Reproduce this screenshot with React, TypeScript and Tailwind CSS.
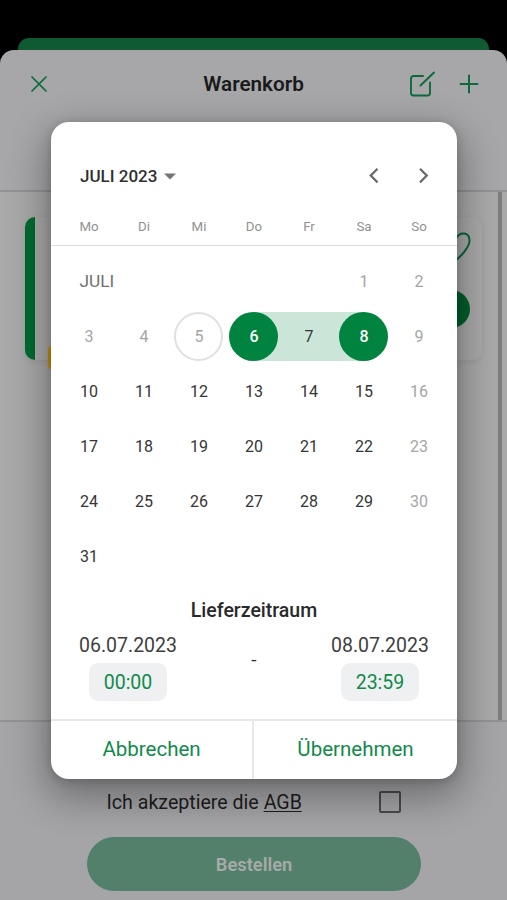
import React, { useState } from 'react';
import clsx from 'clsx';

type DayState = 'default' | 'disabled' | 'today' | 'start' | 'between' | 'end';

type DayCellProps = {
  day: number;
  state: DayState;
};

type DeliveryTimeProps = {
  date: string;
  time: string;
};

const WEEKDAYS = ['Mo', 'Di', 'Mi', 'Do', 'Fr', 'Sa', 'So'];
const DAYS = Array.from({ length: 31 }, (_, i) => i + 1);

const getDayState = (day: number): DayState => {
  if (day === 5) return 'today';
  if (day === 6) return 'start';
  if (day === 7) return 'between';
  if (day === 8) return 'end';
  // Past days and Sundays can't be picked
  if (day < 5 || day % 7 === 2) return 'disabled';
  return 'default';
};

const DayCell: React.FC<DayCellProps> = ({ day, state }) => (
  <div
    className={clsx(
      'flex h-[55px] items-center justify-center',
      state === 'start' && 'bg-[linear-gradient(90deg,transparent_50%,#cbe6d8_50%)] bg-[length:100%_49px] bg-center bg-no-repeat',
      state === 'between' && 'bg-[linear-gradient(#cbe6d8,#cbe6d8)] bg-[length:100%_49px] bg-center bg-no-repeat',
      state === 'end' && 'bg-[linear-gradient(90deg,#cbe6d8_50%,transparent_50%)] bg-[length:100%_49px] bg-center bg-no-repeat'
    )}
  >
    <button
      className={clsx(
        'flex size-[49px] items-center justify-center rounded-full pl-px text-[16px]',
        (state === 'default' || state === 'between') && 'text-[#353535]',
        state === 'disabled' && 'text-[#a5a5a5]',
        state === 'today' && 'border-2 border-[#e0e0e0] text-[#a5a5a5]',
        (state === 'start' || state === 'end') && 'bg-[#00833e] font-medium text-white'
      )}
    >
      {day}
    </button>
  </div>
);

const DeliveryTime: React.FC<DeliveryTimeProps> = ({ date, time }) => (
  <div className="flex w-[98px] flex-col items-center">
    <span className="text-[19.5px] leading-[24px] whitespace-nowrap text-[#3f3f3f]">{date}</span>
    <button className="mt-[5px] h-[38px] w-[78px] rounded-[9px] bg-[#eff0f1] pt-px text-[19.5px] text-[#118a4b]">
      {time}
    </button>
  </div>
);

const DateRangeDialog: React.FC = () => (
  <div className="absolute top-[122px] left-[51px] flex h-[657px] w-[406px] flex-col overflow-hidden rounded-[18px] bg-white shadow-[0_14px_38px_6px_rgba(0,0,0,0.32),0_2px_10px_rgba(0,0,0,0.18)]">
    <div className="mt-[40px] flex h-[28px] items-center pr-[24px] pl-[29px]">
      <button className="flex items-center gap-[7px] pt-px text-[17px] font-medium whitespace-nowrap text-[#303030]">
        JULI 2023
        <svg width="12" height="7" viewBox="0 0 12 7" fill="#757575">
          <path d="M0 .5h12L6 6.5z" />
        </svg>
      </button>
      <div className="ml-auto flex gap-[30px]">
        <button>
          <svg width="19" height="18" viewBox="0 0 19 18" fill="none" stroke="#6a6a6a" strokeWidth="2.2">
            <path d="M12.5 1.8 5.7 8.6l6.8 6.8" />
          </svg>
        </button>
        <button>
          <svg width="19" height="18" viewBox="0 0 19 18" fill="none" stroke="#6a6a6a" strokeWidth="2.2">
            <path d="m6 1.8 6.8 6.8-6.8 6.8" />
          </svg>
        </button>
      </div>
    </div>

    <div className="mt-[25px] grid h-[24px] grid-cols-7 items-center px-[10.5px] text-center text-[13.3px] text-[#919191]">
      {WEEKDAYS.map((weekday) => (
        <span key={weekday}>{weekday}</span>
      ))}
    </div>

    <div className="mt-[6px] grid grid-cols-7 border-t-[1.5px] border-[#dedede] pt-[8px] pr-[11px] pl-[10px]">
      <div className="col-span-5 flex h-[55px] items-center pt-px pl-[18.5px] text-[17.3px] text-[#707070]">JULI</div>
      {DAYS.map((day) => (
        <DayCell key={day} day={day} state={getDayState(day)} />
      ))}
    </div>

    <h2 className="mt-[14px] text-center text-[19.5px] leading-[26px] font-medium text-[#292929]">Lieferzeitraum</h2>
    <div className="mt-[10px] flex justify-between px-[28px]">
      <DeliveryTime date="06.07.2023" time="00:00" />
      <span className="mt-[14px] text-[19px] leading-[24px] text-[#303030]">-</span>
      <DeliveryTime date="08.07.2023" time="23:59" />
    </div>

    <div className="mt-auto flex h-[60px] border-t-2 border-[#e8e8e8] text-[20.5px] text-[#118a4b]">
      <button className="w-[203px] border-r-2 border-[#e8e8e8] pb-[2px]">Abbrechen</button>
      <button className="flex-1 pb-[2px]">Übernehmen</button>
    </div>
  </div>
);

const App: React.FC = () => {
  const [accepted, setAccepted] = useState(false);

  return (
    <div className="relative flex h-[900px] w-[507px] flex-col overflow-hidden bg-black pt-[38px] font-[Roboto,sans-serif]">
      {/* Card of the screen behind the cart sheet */}
      <div className="mx-[18px] h-[12px] shrink-0 rounded-t-[11px] bg-[#0f5a32]" />

      <div className="flex flex-1 flex-col overflow-hidden rounded-t-[14px] bg-[#a7a7a9]">
        <header className="flex h-[142px] items-start border-b-2 border-[#929396] pt-[20px]">
          <div className="flex h-[28px] w-full items-center px-[27px]">
            <button className="w-[74px] pl-[4px]">
              <svg width="16" height="16" viewBox="0 0 16 16" fill="none" stroke="#0b6b3b" strokeWidth="1.7" strokeLinecap="round">
                <path d="m1 1 14 14M15 1 1 15" />
              </svg>
            </button>
            <h1 className="flex-1 text-center text-[20.7px] leading-[28px] font-semibold text-[#1a1a1c]">Warenkorb</h1>
            <div className="flex w-[74px] items-center justify-end gap-[24px] pr-px">
              <svg className="shrink-0" width="27" height="27" viewBox="0 0 27 27" fill="none" stroke="#0b6b3b" strokeWidth="1.9" strokeLinecap="round" strokeLinejoin="round">
                <path d="M15 5H5.5A2.5 2.5 0 0 0 3 7.5V22a2.5 2.5 0 0 0 2.500 2.500h14A2.500 2.500 0 0 0 22 22V11.500" />
                <path d="M12.500 14.500 26 1.500" />
              </svg>
              <svg className="shrink-0" width="20" height="20" viewBox="0 0 20 20" fill="none" stroke="#0b6b3b" strokeWidth="2" strokeLinecap="round">
                <path d="M10 1.500v17M1.500 10h17" />
              </svg>
            </div>
          </div>
        </header>

        <main className="flex flex-1 bg-[#a9a9a9] pl-[25px]">
          <div className="mt-[25px] flex h-[143px] w-[457px] rounded-[9px] bg-[#aaaaaa] shadow-[0_2px_6px_rgba(0,0,0,0.07)]">
            <div className="w-[10px] rounded-l-[10px] bg-[#006b30]" />
            <div className="mt-auto mb-[-10px] ml-[13px] h-[25px] w-[20px] rounded-[5px] bg-[#d09010]" />
            <div className="ml-auto flex w-[40px] flex-col items-end pr-[12px]">
              <svg className="-mr-px mt-[15px] shrink-0" width="30" height="30" viewBox="0 0 30 30" fill="none" stroke="#07673a" strokeWidth="2">
                <path d="M15 28C9 23.500 1.500 14.500 1.500 8.500c0-8.500 9.500-9.500 13.500-2C19-1 28.500 0 28.500 8.500 28.500 14.500 21 23.500 15 28z" />
              </svg>
              <div className="mt-[28px] size-[38px] shrink-0 rounded-full bg-[#00602b]" />
            </div>
          </div>
          <div className="ml-auto w-[4px] bg-[#7e7e7e]" />
          <div className="w-[5px]" />
        </main>

        <footer className="flex h-[180px] flex-col items-center border-t-2 border-[#929396] bg-[#a5a5a8] pt-[66px]">
          <label className="flex h-[28px] w-[294px] items-center justify-between pt-px text-[19.6px] whitespace-nowrap text-[#1d1d1f]">
            <span>
              Ich akzeptiere die <span className="underline underline-offset-2">AGB</span>
            </span>
            <input
              type="checkbox"
              checked={accepted}
              onChange={(e) => setAccepted(e.target.checked)}
              className="-mt-[2px] size-[22px] appearance-none rounded-[2px] border-2 border-[#4a4a4c] checked:bg-[#0b6b3b]"
            />
          </label>
          <button className="mt-[21px] ml-px h-[54px] w-[334px] rounded-full bg-[#53806a] pt-px text-[18.3px] font-semibold text-[#a6aaa8]">
            Bestellen
          </button>
        </footer>
      </div>

      <DateRangeDialog />
    </div>
  );
};

export default App;
